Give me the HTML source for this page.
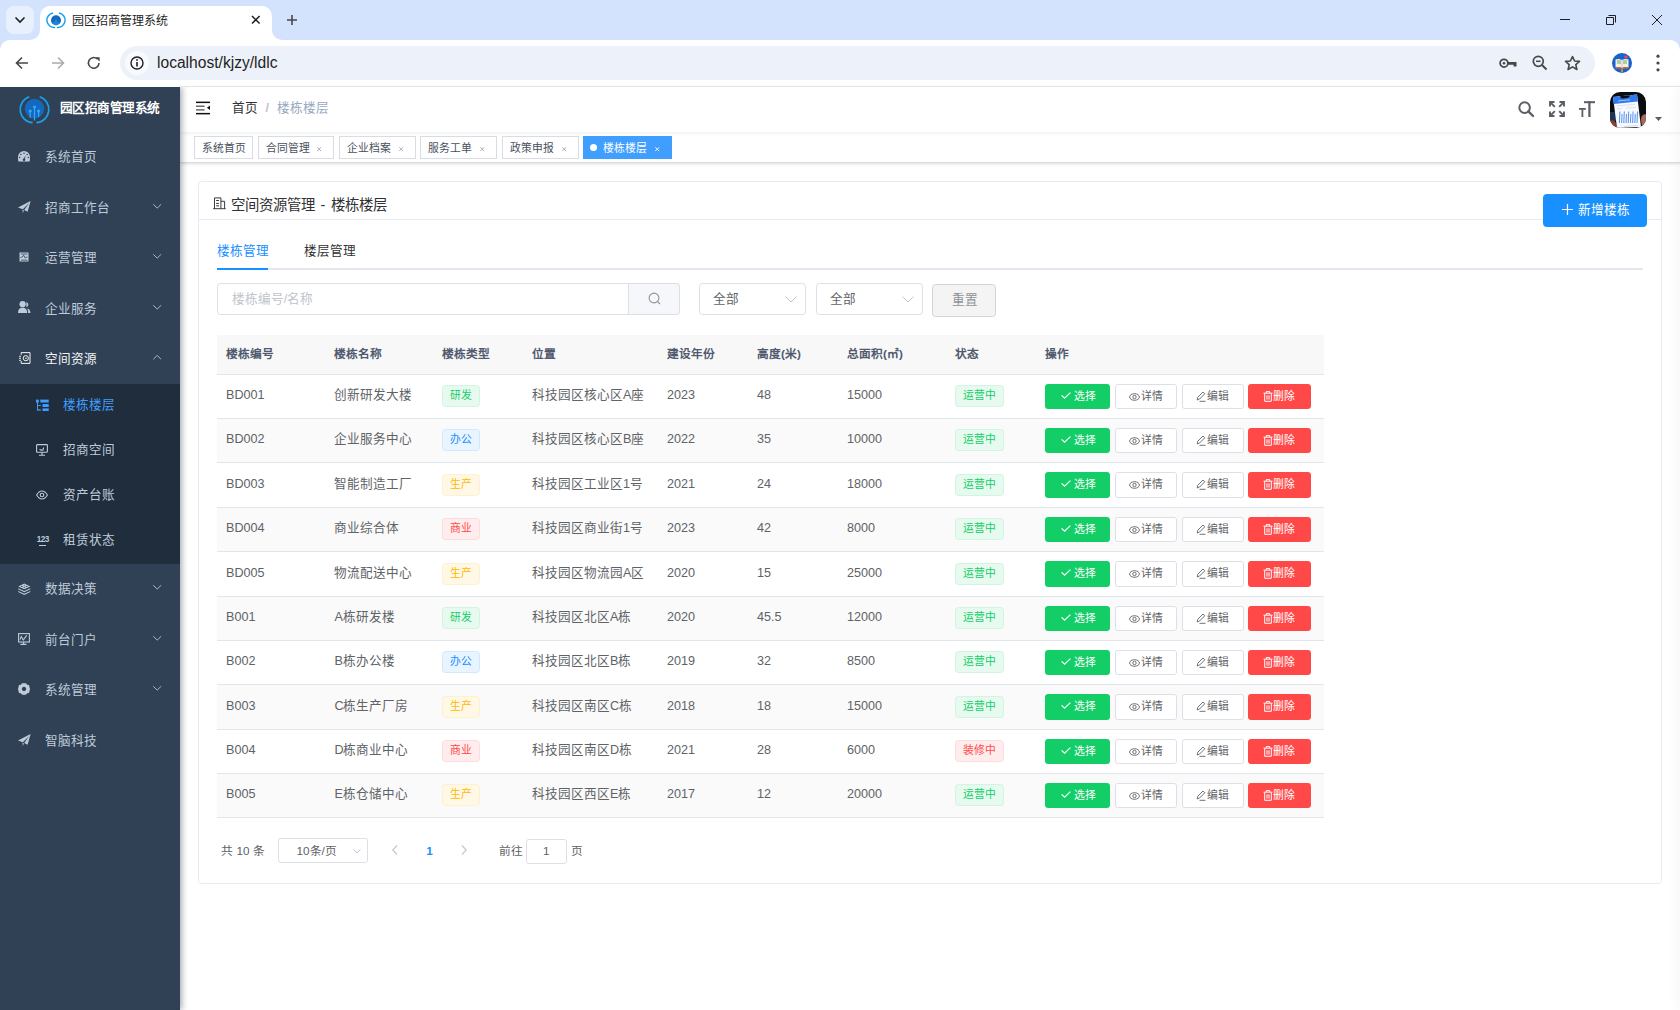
<!DOCTYPE html>
<html lang="zh-CN">
<head>
<meta charset="utf-8">
<style>
*{box-sizing:border-box;margin:0;padding:0}
html,body{width:1680px;height:1010px;overflow:hidden;background:#fff;font-family:"Liberation Sans",sans-serif;}
.a{position:absolute}
.t{position:absolute;white-space:nowrap}
svg{overflow:visible}
</style>
</head>
<body>
<div class="a" style="left:0px;top:0px;width:1680px;height:60px;background:#d3e3fd"></div><div class="a" style="left:0px;top:40px;width:1680px;height:47px;background:#fff;border-radius:10px 10px 0 0"></div><div class="a" style="left:6px;top:6px;width:28px;height:28px;background:#e8effd;border-radius:8px"></div><svg class="a" style="left:14px;top:16px;" width="12" height="8" viewBox="0 0 12 8"><path d="M1.5 1.5 L6 6 L10.5 1.5" fill="none" stroke="#1f1f1f" stroke-width="1.6"/></svg><svg class="a" style="left:30px;top:6px;" width="252" height="34" viewBox="0 0 252 34"><path d="M0 34 A10 10 0 0 0 10 24 L10 10 A10 10 0 0 1 20 0 L232 0 A10 10 0 0 1 242 10 L242 24 A10 10 0 0 0 252 34 Z" fill="#fff"/></svg><svg class="a" style="left:48px;top:12px;" width="16" height="16" viewBox="0 0 16 16"><path d="M5.2 0.9 A7.3 7.3 0 0 0 7.2 15.4" fill="none" stroke="#1aa3f0" stroke-width="1.5"/><path d="M10.8 0.9 A7.3 7.3 0 0 1 8.8 15.4" fill="none" stroke="#1aa3f0" stroke-width="1.5"/><circle cx="8" cy="8.2" r="5" fill="#1468c0"/><path d="M6 12.5 V9.5 M8 13.5 V7.5 M10 12.5 V9.5" stroke="#2ea6f0" stroke-width="0.9"/></svg><div class="t" style="left:72px;top:12.60px;font-size:12px;line-height:16.8px;color:#1f1f1f;font-weight:400;">园区招商管理系统</div><svg class="a" style="left:252.2px;top:16.1px;" width="7.6" height="7.6" viewBox="0 0 7.6 7.6"><path d="M0 0 L7.6 7.6 M7.6 0 L0 7.6" stroke="#1f1f1f" stroke-width="1.5"/></svg><svg class="a" style="left:287px;top:15px;" width="10" height="10" viewBox="0 0 10 10"><path d="M5 0 V10 M0 5 H10" stroke="#474747" stroke-width="1.6"/></svg><svg class="a" style="left:1560px;top:19px;" width="10" height="2" viewBox="0 0 10 2"><path d="M0 0.5 H10" stroke="#1f1f1f" stroke-width="1"/></svg><svg class="a" style="left:1604px;top:14px;" width="13" height="13" viewBox="0 0 13 13"><path d="M2.5 3.5 H9.5 V10.5 H2.5 Z M4.5 1.5 H11.5 V8.5" fill="none" stroke="#1f1f1f" stroke-width="1"/></svg><svg class="a" style="left:1652px;top:15px;" width="10" height="10" viewBox="0 0 10 10"><path d="M0 0 L10 10 M10 0 L0 10" stroke="#1f1f1f" stroke-width="1"/></svg><svg class="a" style="left:15px;top:56px;" width="14" height="14" viewBox="0 0 14 14"><path d="M13 7 H2 M7 1.5 L1.5 7 L7 12.5" fill="none" stroke="#474747" stroke-width="1.6"/></svg><svg class="a" style="left:51px;top:56px;" width="14" height="14" viewBox="0 0 14 14"><path d="M1 7 H12 M7 1.5 L12.5 7 L7 12.5" fill="none" stroke="#a8abb0" stroke-width="1.6"/></svg><svg class="a" style="left:87px;top:56px;" width="14" height="14" viewBox="0 0 14 14"><path d="M12 7 A5.3 5.3 0 1 1 10.2 2.9" fill="none" stroke="#474747" stroke-width="1.6"/><path d="M8.2 1.2 H12.6 V5.6 Z" fill="#474747"/></svg><div class="a" style="left:120px;top:46px;width:1475px;height:34px;background:#edf2fa;border-radius:17px"></div><div class="a" style="left:125px;top:51px;width:24px;height:24px;border-radius:12px;background:#f8fafd"></div><svg class="a" style="left:130px;top:56px;" width="14" height="14" viewBox="0 0 14 14"><circle cx="7" cy="7" r="6" fill="none" stroke="#1f1f1f" stroke-width="1.4"/><path d="M7 6 V10.5" stroke="#1f1f1f" stroke-width="1.6"/><circle cx="7" cy="3.9" r="0.95" fill="#1f1f1f"/></svg><div class="t" style="left:157.0px;top:52.28px;font-size:15.6px;line-height:21.84px;color:#1f1f1f;font-weight:400;">localhost/kjzy/ldlc</div><svg class="a" style="left:1499px;top:58px;" width="19" height="11" viewBox="0 0 19 11"><circle cx="5" cy="5.2" r="3.9" fill="none" stroke="#474747" stroke-width="1.7"/><circle cx="5" cy="5.2" r="1.3" fill="#474747"/><path d="M8.8 4 H17.5 V8.6 H14.5 V6.8 H8.8 Z" fill="#474747"/></svg><svg class="a" style="left:1532px;top:55px;" width="16" height="16" viewBox="0 0 16 16"><circle cx="6.3" cy="6.3" r="5" fill="none" stroke="#474747" stroke-width="1.7"/><path d="M10 10 L14.5 14.5" stroke="#474747" stroke-width="1.9"/><path d="M4 6.3 H8.6" stroke="#474747" stroke-width="1.5"/></svg><svg class="a" style="left:1564px;top:55px;" width="17" height="16" viewBox="0 0 17 16"><path d="M8.5 1.5 L10.6 6 L15.5 6.4 L11.8 9.6 L12.9 14.5 L8.5 11.9 L4.1 14.5 L5.2 9.6 L1.5 6.4 L6.4 6 Z" fill="none" stroke="#474747" stroke-width="1.6" stroke-linejoin="round"/></svg><svg class="a" style="left:1612px;top:53px;" width="20" height="20" viewBox="0 0 20 20"><circle cx="10" cy="10" r="10" fill="#1a62c7"/><path d="M3.5 6.5 Q7 5.5 10 7 Q13 5.5 16.5 6.5 V14.5 Q13 13.5 10 15 Q7 13.5 3.5 14.5 Z" fill="#f4efe4"/><path d="M3.5 14.5 Q7 13.5 10 15 Q13 13.5 16.5 14.5 V15.8 Q13 15 10 16.3 Q7 15 3.5 15.8 Z" fill="#d66a2c"/><path d="M11 8 H15 M11 10 H15 M5 8 H9 M5 10 H9" stroke="#5aa25a" stroke-width="0.9"/><path d="M10 7 V15" stroke="#c9b89a" stroke-width="0.6"/><rect x="9.4" y="16.2" width="1.2" height="3" fill="#f2c230"/><path d="M12 3 L15 2.5 L16 5 L13 5.5 Z" fill="#e84b5a"/></svg><svg class="a" style="left:1656px;top:54px;" width="4" height="18" viewBox="0 0 4 18"><circle cx="2" cy="2.2" r="1.6" fill="#474747"/><circle cx="2" cy="9" r="1.6" fill="#474747"/><circle cx="2" cy="15.8" r="1.6" fill="#474747"/></svg><div class="a" style="left:180px;top:86px;width:1500px;height:1px;background:#e6e7e9"></div><div class="a" style="left:180px;top:132px;width:1500px;height:30.6px;background:#fff;border-bottom:1px solid #d8dce5;box-shadow:0 1px 3px 0 rgba(0,0,0,.12),0 0 3px 0 rgba(0,0,0,.04)"></div><div class="a" style="left:180px;top:87px;width:1500px;height:45px;background:#fff;box-shadow:0 1px 4px rgba(0,21,41,.08)"></div><svg class="a" style="left:196px;top:101px;" width="14.5" height="14" viewBox="0 0 14.5 14"><rect x="0" y="0.6" width="14" height="1.5" fill="#111"/><rect x="0" y="11.9" width="14" height="1.5" fill="#111"/><rect x="0" y="4.6" width="8.6" height="1.2" fill="#444"/><rect x="0" y="8.3" width="8.6" height="1.2" fill="#444"/><path d="M14 4.4 V8.9 L10.9 6.65 Z" fill="#111"/></svg><div class="t" style="left:232.0px;top:100.18px;font-size:12.6px;line-height:17.64px;color:#303133;font-weight:400;">首页</div><div class="t" style="left:265.5px;top:100.18px;font-size:12.6px;line-height:17.64px;color:#c0c4cc;font-weight:400;font-weight:700">/</div><div class="t" style="left:276.8px;top:100.18px;font-size:12.6px;line-height:17.64px;color:#97a8be;font-weight:400;">楼栋楼层</div><svg class="a" style="left:1518px;top:101px;" width="16" height="16" viewBox="0 0 16 16"><circle cx="6.6" cy="6.6" r="5.3" fill="none" stroke="#5a5e66" stroke-width="2"/><path d="M10.4 10.4 L15 15" stroke="#5a5e66" stroke-width="2.4" stroke-linecap="round"/></svg><svg class="a" style="left:1549px;top:101px;" width="16" height="16" viewBox="0 0 16 16"><g stroke="#5a5e66" stroke-width="1.9" fill="none"><path d="M1 5.5 V1 H5.5 M1 1 L5.8 5.8"/><path d="M15 5.5 V1 H10.5 M15 1 L10.2 5.8"/><path d="M1 10.5 V15 H5.5 M1 15 L5.8 10.2"/><path d="M15 10.5 V15 H10.5 M15 15 L10.2 10.2"/></g></svg><svg class="a" style="left:1579px;top:101px;" width="16" height="16" viewBox="0 0 16 16"><g fill="#5a5e66"><rect x="5" y="0.2" width="11" height="2"/><rect x="9.3" y="0.2" width="2.2" height="15.8"/><rect x="0" y="7" width="6.8" height="1.8"/><rect x="2.5" y="7" width="1.8" height="9"/></g></svg><svg class="a" style="left:1610px;top:92px" width="36" height="36" viewBox="0 0 36 36"><defs><clipPath id="av"><rect x="0" y="0" width="36" height="36" rx="10"/></clipPath></defs><g clip-path="url(#av)"><rect width="36" height="36" fill="#0b0c0f"/><rect x="0" y="20" width="6" height="9" fill="#1d3550"/><path d="M0 29 Q4 27 6 31 L7 36 H0 Z" fill="#8a3f2e"/><path d="M36 22 Q31 22 31 28 L32 34 Q34 35 36 33 Z" fill="#a8685a"/><path d="M3 5 L27 2.5 L31 35 L7 36 Z" fill="#f7f9fc"/><path d="M3 5 L27 2.5 L27.8 9.5 L3.8 12 Z" fill="#2f7af0"/><path d="M10 4.3 L20 3.3 Q19.5 5.8 17.5 6 L12.5 6.5 Q10.5 6.6 10 4.3 Z" fill="#0b0c0f"/><path d="M8 9 L20 7.8" stroke="#bcd3fa" stroke-width="0.8"/><path d="M7 14 L25 12.3 M7 17 L12 16.6 M16 16.2 L26 15.2" stroke="#c8d2e2" stroke-width="0.6"/><path d="M9.4 31 L9.9 19.5" stroke="#3f86f2" stroke-width="0.9"/><path d="M11.6 31 L12.1 22.0" stroke="#3f86f2" stroke-width="0.9"/><path d="M13.8 31 L14.3 19.5" stroke="#3f86f2" stroke-width="0.9"/><path d="M16.0 31 L16.5 22.0" stroke="#3f86f2" stroke-width="0.9"/><path d="M18.2 31 L18.7 19.5" stroke="#3f86f2" stroke-width="0.9"/><path d="M20.4 31 L20.9 22.0" stroke="#3f86f2" stroke-width="0.9"/><path d="M22.6 31 L23.1 19.5" stroke="#3f86f2" stroke-width="0.9"/><path d="M24.8 31 L25.3 22.0" stroke="#3f86f2" stroke-width="0.9"/><path d="M27.0 31 L27.5 19.5" stroke="#3f86f2" stroke-width="0.9"/><path d="M14 34.5 L28 33.5" stroke="#b7c6dd" stroke-width="0.6"/></g></svg><svg class="a" style="left:1655px;top:117px;" width="7" height="4" viewBox="0 0 7 4"><path d="M0 0 H7 L3.5 4 Z" fill="#5a5e66"/></svg><div class="a" style="left:194.3px;top:136.3px;width:58.599999999999994px;height:22.4px;background:#fff;border:1px solid #d8dce5"></div><div class="t" style="left:202.3px;top:141.04px;font-size:10.8px;line-height:15.12px;color:#495060;font-weight:400;">系统首页</div><div class="a" style="left:258.3px;top:136.3px;width:75.30000000000001px;height:22.4px;background:#fff;border:1px solid #d8dce5"></div><div class="t" style="left:266.3px;top:141.04px;font-size:10.8px;line-height:15.12px;color:#495060;font-weight:400;">合同管理</div><svg class="a" style="left:316.6px;top:146.6px;" width="4.4" height="4.4" viewBox="0 0 4.4 4.4"><path d="M0.3 0.3 L4.1 4.1 M4.1 0.3 L0.3 4.1" stroke="#a0a4ab" stroke-width="0.9"/></svg><div class="a" style="left:339.2px;top:136.3px;width:76.5px;height:22.4px;background:#fff;border:1px solid #d8dce5"></div><div class="t" style="left:347.2px;top:141.04px;font-size:10.8px;line-height:15.12px;color:#495060;font-weight:400;">企业档案</div><svg class="a" style="left:398.7px;top:146.6px;" width="4.4" height="4.4" viewBox="0 0 4.4 4.4"><path d="M0.3 0.3 L4.1 4.1 M4.1 0.3 L0.3 4.1" stroke="#a0a4ab" stroke-width="0.9"/></svg><div class="a" style="left:420.0px;top:136.3px;width:76.69999999999999px;height:22.4px;background:#fff;border:1px solid #d8dce5"></div><div class="t" style="left:428.0px;top:141.04px;font-size:10.8px;line-height:15.12px;color:#495060;font-weight:400;">服务工单</div><svg class="a" style="left:479.7px;top:146.6px;" width="4.4" height="4.4" viewBox="0 0 4.4 4.4"><path d="M0.3 0.3 L4.1 4.1 M4.1 0.3 L0.3 4.1" stroke="#a0a4ab" stroke-width="0.9"/></svg><div class="a" style="left:502.0px;top:136.3px;width:76.60000000000002px;height:22.4px;background:#fff;border:1px solid #d8dce5"></div><div class="t" style="left:510.0px;top:141.04px;font-size:10.8px;line-height:15.12px;color:#495060;font-weight:400;">政策申报</div><svg class="a" style="left:561.6px;top:146.6px;" width="4.4" height="4.4" viewBox="0 0 4.4 4.4"><path d="M0.3 0.3 L4.1 4.1 M4.1 0.3 L0.3 4.1" stroke="#a0a4ab" stroke-width="0.9"/></svg><div class="a" style="left:582.8px;top:136.3px;width:89.0px;height:22.4px;background:#409eff;border:1px solid #409eff"></div><div class="a" style="left:590.3px;top:143.9px;width:7.2px;height:7.2px;border-radius:50%;background:#fff"></div><div class="t" style="left:603.3px;top:141.04px;font-size:10.8px;line-height:15.12px;color:#fff;font-weight:400;">楼栋楼层</div><svg class="a" style="left:654.8px;top:146.6px;" width="4.4" height="4.4" viewBox="0 0 4.4 4.4"><path d="M0.3 0.3 L4.1 4.1 M4.1 0.3 L0.3 4.1" stroke="#fff" stroke-width="0.9"/></svg><div class="a" style="left:198px;top:181px;width:1464px;height:703px;background:#fff;border:1px solid #e6ebf5;border-radius:3.6px"></div><div class="a" style="left:199px;top:219px;width:1462px;height:1px;background:#e6ebf5"></div><svg class="a" style="left:213px;top:197px;" width="13" height="13" viewBox="0 0 13 13"><g fill="none" stroke="#303133" stroke-width="0.95"><path d="M1.5 11.7 V0.9 H7.9 V11.7"/><path d="M7.9 4.3 H11.6 V11.7"/><path d="M0.1 11.7 H12.7"/><path d="M3.1 3.5 H6 M3.1 6.4 H6 M3.1 8.8 H6"/></g></svg><div class="t" style="left:231px;top:194.92px;font-size:14.4px;line-height:20.16px;color:#303133;font-weight:400;word-spacing:1.6px">空间资源管理 - 楼栋楼层</div><div class="a" style="left:1542.7px;top:194.2px;width:104.6px;height:32.6px;background:#1890ff;border:1px solid #1890ff;border-radius:3.6px"></div><svg class="a" style="left:1562px;top:204px;" width="11" height="11" viewBox="0 0 11 11"><path d="M5.5 0 V11 M0 5.5 H11" stroke="#fff" stroke-width="1.2"/></svg><div class="t" style="left:1578px;top:201.68px;font-size:12.6px;line-height:17.64px;color:#fff;font-weight:400;">新增楼栋</div><div class="t" style="left:217px;top:243.18px;font-size:12.6px;line-height:17.64px;color:#1890ff;font-weight:400;">楼栋管理</div><div class="t" style="left:303.6px;top:243.18px;font-size:12.6px;line-height:17.64px;color:#303133;font-weight:400;">楼层管理</div><div class="a" style="left:217px;top:268px;width:1426px;height:2px;background:#e4e7ed"></div><div class="a" style="left:217px;top:268px;width:50.5px;height:2px;background:#1890ff"></div><div class="a" style="left:217.3px;top:283.4px;width:462.4px;height:31.4px;background:#fff;border:1px solid #dcdfe6;border-radius:3.6px"></div><div class="a" style="left:628.4px;top:283.4px;width:51.3px;height:31.4px;background:#f5f7fa;border:1px solid #dcdfe6;border-radius:0 3.6px 3.6px 0"></div><div class="t" style="left:231.8px;top:291.18px;font-size:12.6px;line-height:17.64px;color:#c0c4cc;font-weight:400;">楼栋编号/名称</div><svg class="a" style="left:648px;top:292px;" width="13" height="13" viewBox="0 0 13 13"><circle cx="6" cy="6" r="4.9" fill="none" stroke="#909399" stroke-width="1.1"/><path d="M9.6 9.6 L12 12" stroke="#909399" stroke-width="1.1"/></svg><div class="a" style="left:698.5px;top:283.1px;width:107.20000000000005px;height:31.6px;background:#fff;border:1px solid #dcdfe6;border-radius:3.6px"></div><div class="t" style="left:713.0px;top:291.18px;font-size:12.6px;line-height:17.64px;color:#606266;font-weight:400;">全部</div><svg class="a" style="left:784.9000000000001px;top:296.4px;" width="12" height="6.5" viewBox="0 0 12 6.5"><path d="M0.5 0.5 L6 6 L11.5 0.5" fill="none" stroke="#c0c4cc" stroke-width="1"/></svg><div class="a" style="left:815.5px;top:283.1px;width:107.0px;height:31.6px;background:#fff;border:1px solid #dcdfe6;border-radius:3.6px"></div><div class="t" style="left:830.0px;top:291.18px;font-size:12.6px;line-height:17.64px;color:#606266;font-weight:400;">全部</div><svg class="a" style="left:901.7px;top:296.4px;" width="12" height="6.5" viewBox="0 0 12 6.5"><path d="M0.5 0.5 L6 6 L11.5 0.5" fill="none" stroke="#c0c4cc" stroke-width="1"/></svg><div class="a" style="left:932.2px;top:284.3px;width:63.4px;height:32.4px;background:#f4f4f5;border:1px solid #d3d4d6;border-radius:3.6px"></div><div class="t" style="left:951.5px;top:292.48px;font-size:12.6px;line-height:17.64px;color:#909399;font-weight:400;">重置</div><div class="a" style="left:217px;top:335px;width:1107px;height:39px;background:#f8f8f9"></div><div class="a" style="left:217px;top:374px;width:1107px;height:1px;background:#dfe6ec"></div><div class="t" style="left:226px;top:345.61px;font-size:11.7px;line-height:16.38px;color:#515a6e;font-weight:700;">楼栋编号</div><div class="t" style="left:334.4px;top:345.61px;font-size:11.7px;line-height:16.38px;color:#515a6e;font-weight:700;">楼栋名称</div><div class="t" style="left:442.3px;top:345.61px;font-size:11.7px;line-height:16.38px;color:#515a6e;font-weight:700;">楼栋类型</div><div class="t" style="left:532px;top:345.61px;font-size:11.7px;line-height:16.38px;color:#515a6e;font-weight:700;">位置</div><div class="t" style="left:667px;top:345.61px;font-size:11.7px;line-height:16.38px;color:#515a6e;font-weight:700;">建设年份</div><div class="t" style="left:757px;top:345.61px;font-size:11.7px;line-height:16.38px;color:#515a6e;font-weight:700;">高度(米)</div><div class="t" style="left:847px;top:345.61px;font-size:11.7px;line-height:16.38px;color:#515a6e;font-weight:700;">总面积(㎡)</div><div class="t" style="left:955px;top:345.61px;font-size:11.7px;line-height:16.38px;color:#515a6e;font-weight:700;">状态</div><div class="t" style="left:1045px;top:345.61px;font-size:11.7px;line-height:16.38px;color:#515a6e;font-weight:700;">操作</div><div class="a" style="left:217px;top:418px;width:1107px;height:1px;background:#dfe6ec"></div><div class="t" style="left:226px;top:387.18px;font-size:12.6px;line-height:17.64px;color:#606266;font-weight:400;">BD001</div><div class="t" style="left:334.4px;top:387.18px;font-size:12.6px;line-height:17.64px;color:#606266;font-weight:400;">创新研发大楼</div><div class="t" style="left:532px;top:387.18px;font-size:12.6px;line-height:17.64px;color:#606266;font-weight:400;">科技园区核心区A座</div><div class="t" style="left:667px;top:387.18px;font-size:12.6px;line-height:17.64px;color:#606266;font-weight:400;">2023</div><div class="t" style="left:757px;top:387.18px;font-size:12.6px;line-height:17.64px;color:#606266;font-weight:400;">48</div><div class="t" style="left:847px;top:387.18px;font-size:12.6px;line-height:17.64px;color:#606266;font-weight:400;">15000</div><div class="a" style="left:442.3px;top:385px;width:37.5px;height:22px;background:#e7faf0;border:1px solid #d0f5e0;border-radius:3.6px"></div><div class="t" style="left:449.6px;top:388.34px;font-size:10.8px;line-height:15.12px;color:#13ce66;font-weight:400;">研发</div><div class="a" style="left:955.2px;top:385px;width:48.6px;height:22px;background:#e7faf0;border:1px solid #d0f5e0;border-radius:3.6px"></div><div class="t" style="left:962.5px;top:388.34px;font-size:10.8px;line-height:15.12px;color:#13ce66;font-weight:400;">运营中</div><div class="a" style="left:1045.1px;top:384px;width:64.6px;height:25px;background:#13ce66;border:1px solid #13ce66;border-radius:2.7px"></div><svg class="a" style="left:1060.5px;top:392.4px;" width="10" height="7" viewBox="0 0 10 7"><path d="M0.6 3.4 L3.6 6.2 L9.4 0.6" fill="none" stroke="#fff" stroke-width="1.2"/></svg><div class="t" style="left:1073.6px;top:389.24px;font-size:10.8px;line-height:15.12px;color:#fff;font-weight:400;">选择</div><div class="a" style="left:1115.2px;top:384px;width:61.5px;height:25px;background:#fff;border:1px solid #dcdfe6;border-radius:2.7px"></div><svg class="a" style="left:1129px;top:392.5px;" width="11" height="8" viewBox="0 0 11 8"><ellipse cx="5.5" cy="4" rx="4.9" ry="3.3" fill="none" stroke="#606266" stroke-width="0.9"/><circle cx="5.5" cy="4" r="1.7" fill="none" stroke="#606266" stroke-width="0.9"/></svg><div class="t" style="left:1140.5px;top:389.24px;font-size:10.8px;line-height:15.12px;color:#606266;font-weight:400;">详情</div><div class="a" style="left:1182.2px;top:384px;width:61.4px;height:25px;background:#fff;border:1px solid #dcdfe6;border-radius:2.7px"></div><svg class="a" style="left:1196px;top:391px;" width="10" height="11" viewBox="0 0 10 11"><path d="M1.2 9 L1.8 6.2 L7 1 L8.8 2.8 L3.6 8 Z" fill="none" stroke="#606266" stroke-width="0.9"/><path d="M3.5 10.3 H9.5" stroke="#606266" stroke-width="0.9"/></svg><div class="t" style="left:1206.5px;top:389.24px;font-size:10.8px;line-height:15.12px;color:#606266;font-weight:400;">编辑</div><div class="a" style="left:1248px;top:384px;width:62.8px;height:25px;background:#ff4949;border:1px solid #ff4949;border-radius:2.7px"></div><svg class="a" style="left:1262.5px;top:391px;" width="10" height="11" viewBox="0 0 10 11"><path d="M0.5 2.2 H9.5 M3.3 2 V0.6 H6.7 V2 M1.7 2.5 V10.3 H8.3 V2.5 M4 4.3 V8.6 M6 4.3 V8.6" fill="none" stroke="#fff" stroke-width="1"/></svg><div class="t" style="left:1273px;top:389.24px;font-size:10.8px;line-height:15.12px;color:#fff;font-weight:400;">删除</div><div class="a" style="left:217px;top:419px;width:1107px;height:43px;background:#fafafa"></div><div class="a" style="left:217px;top:462px;width:1107px;height:1px;background:#dfe6ec"></div><div class="t" style="left:226px;top:431.18px;font-size:12.6px;line-height:17.64px;color:#606266;font-weight:400;">BD002</div><div class="t" style="left:334.4px;top:431.18px;font-size:12.6px;line-height:17.64px;color:#606266;font-weight:400;">企业服务中心</div><div class="t" style="left:532px;top:431.18px;font-size:12.6px;line-height:17.64px;color:#606266;font-weight:400;">科技园区核心区B座</div><div class="t" style="left:667px;top:431.18px;font-size:12.6px;line-height:17.64px;color:#606266;font-weight:400;">2022</div><div class="t" style="left:757px;top:431.18px;font-size:12.6px;line-height:17.64px;color:#606266;font-weight:400;">35</div><div class="t" style="left:847px;top:431.18px;font-size:12.6px;line-height:17.64px;color:#606266;font-weight:400;">10000</div><div class="a" style="left:442.3px;top:429px;width:37.5px;height:22px;background:#e8f4ff;border:1px solid #d1e9ff;border-radius:3.6px"></div><div class="t" style="left:449.6px;top:432.34px;font-size:10.8px;line-height:15.12px;color:#1890ff;font-weight:400;">办公</div><div class="a" style="left:955.2px;top:429px;width:48.6px;height:22px;background:#e7faf0;border:1px solid #d0f5e0;border-radius:3.6px"></div><div class="t" style="left:962.5px;top:432.34px;font-size:10.8px;line-height:15.12px;color:#13ce66;font-weight:400;">运营中</div><div class="a" style="left:1045.1px;top:428px;width:64.6px;height:25px;background:#13ce66;border:1px solid #13ce66;border-radius:2.7px"></div><svg class="a" style="left:1060.5px;top:436.4px;" width="10" height="7" viewBox="0 0 10 7"><path d="M0.6 3.4 L3.6 6.2 L9.4 0.6" fill="none" stroke="#fff" stroke-width="1.2"/></svg><div class="t" style="left:1073.6px;top:433.24px;font-size:10.8px;line-height:15.12px;color:#fff;font-weight:400;">选择</div><div class="a" style="left:1115.2px;top:428px;width:61.5px;height:25px;background:#fff;border:1px solid #dcdfe6;border-radius:2.7px"></div><svg class="a" style="left:1129px;top:436.5px;" width="11" height="8" viewBox="0 0 11 8"><ellipse cx="5.5" cy="4" rx="4.9" ry="3.3" fill="none" stroke="#606266" stroke-width="0.9"/><circle cx="5.5" cy="4" r="1.7" fill="none" stroke="#606266" stroke-width="0.9"/></svg><div class="t" style="left:1140.5px;top:433.24px;font-size:10.8px;line-height:15.12px;color:#606266;font-weight:400;">详情</div><div class="a" style="left:1182.2px;top:428px;width:61.4px;height:25px;background:#fff;border:1px solid #dcdfe6;border-radius:2.7px"></div><svg class="a" style="left:1196px;top:435px;" width="10" height="11" viewBox="0 0 10 11"><path d="M1.2 9 L1.8 6.2 L7 1 L8.8 2.8 L3.6 8 Z" fill="none" stroke="#606266" stroke-width="0.9"/><path d="M3.5 10.3 H9.5" stroke="#606266" stroke-width="0.9"/></svg><div class="t" style="left:1206.5px;top:433.24px;font-size:10.8px;line-height:15.12px;color:#606266;font-weight:400;">编辑</div><div class="a" style="left:1248px;top:428px;width:62.8px;height:25px;background:#ff4949;border:1px solid #ff4949;border-radius:2.7px"></div><svg class="a" style="left:1262.5px;top:435px;" width="10" height="11" viewBox="0 0 10 11"><path d="M0.5 2.2 H9.5 M3.3 2 V0.6 H6.7 V2 M1.7 2.5 V10.3 H8.3 V2.5 M4 4.3 V8.6 M6 4.3 V8.6" fill="none" stroke="#fff" stroke-width="1"/></svg><div class="t" style="left:1273px;top:433.24px;font-size:10.8px;line-height:15.12px;color:#fff;font-weight:400;">删除</div><div class="a" style="left:217px;top:507px;width:1107px;height:1px;background:#dfe6ec"></div><div class="t" style="left:226px;top:475.68px;font-size:12.6px;line-height:17.64px;color:#606266;font-weight:400;">BD003</div><div class="t" style="left:334.4px;top:475.68px;font-size:12.6px;line-height:17.64px;color:#606266;font-weight:400;">智能制造工厂</div><div class="t" style="left:532px;top:475.68px;font-size:12.6px;line-height:17.64px;color:#606266;font-weight:400;">科技园区工业区1号</div><div class="t" style="left:667px;top:475.68px;font-size:12.6px;line-height:17.64px;color:#606266;font-weight:400;">2021</div><div class="t" style="left:757px;top:475.68px;font-size:12.6px;line-height:17.64px;color:#606266;font-weight:400;">24</div><div class="t" style="left:847px;top:475.68px;font-size:12.6px;line-height:17.64px;color:#606266;font-weight:400;">18000</div><div class="a" style="left:442.3px;top:474px;width:37.5px;height:22px;background:#fff8e6;border:1px solid #fff1cc;border-radius:3.6px"></div><div class="t" style="left:449.6px;top:477.34px;font-size:10.8px;line-height:15.12px;color:#ffba00;font-weight:400;">生产</div><div class="a" style="left:955.2px;top:474px;width:48.6px;height:22px;background:#e7faf0;border:1px solid #d0f5e0;border-radius:3.6px"></div><div class="t" style="left:962.5px;top:477.34px;font-size:10.8px;line-height:15.12px;color:#13ce66;font-weight:400;">运营中</div><div class="a" style="left:1045.1px;top:472px;width:64.6px;height:26px;background:#13ce66;border:1px solid #13ce66;border-radius:2.7px"></div><svg class="a" style="left:1060.5px;top:480.4px;" width="10" height="7" viewBox="0 0 10 7"><path d="M0.6 3.4 L3.6 6.2 L9.4 0.6" fill="none" stroke="#fff" stroke-width="1.2"/></svg><div class="t" style="left:1073.6px;top:477.24px;font-size:10.8px;line-height:15.12px;color:#fff;font-weight:400;">选择</div><div class="a" style="left:1115.2px;top:472px;width:61.5px;height:26px;background:#fff;border:1px solid #dcdfe6;border-radius:2.7px"></div><svg class="a" style="left:1129px;top:480.5px;" width="11" height="8" viewBox="0 0 11 8"><ellipse cx="5.5" cy="4" rx="4.9" ry="3.3" fill="none" stroke="#606266" stroke-width="0.9"/><circle cx="5.5" cy="4" r="1.7" fill="none" stroke="#606266" stroke-width="0.9"/></svg><div class="t" style="left:1140.5px;top:477.24px;font-size:10.8px;line-height:15.12px;color:#606266;font-weight:400;">详情</div><div class="a" style="left:1182.2px;top:472px;width:61.4px;height:26px;background:#fff;border:1px solid #dcdfe6;border-radius:2.7px"></div><svg class="a" style="left:1196px;top:479px;" width="10" height="11" viewBox="0 0 10 11"><path d="M1.2 9 L1.8 6.2 L7 1 L8.8 2.8 L3.6 8 Z" fill="none" stroke="#606266" stroke-width="0.9"/><path d="M3.5 10.3 H9.5" stroke="#606266" stroke-width="0.9"/></svg><div class="t" style="left:1206.5px;top:477.24px;font-size:10.8px;line-height:15.12px;color:#606266;font-weight:400;">编辑</div><div class="a" style="left:1248px;top:472px;width:62.8px;height:26px;background:#ff4949;border:1px solid #ff4949;border-radius:2.7px"></div><svg class="a" style="left:1262.5px;top:479px;" width="10" height="11" viewBox="0 0 10 11"><path d="M0.5 2.2 H9.5 M3.3 2 V0.6 H6.7 V2 M1.7 2.5 V10.3 H8.3 V2.5 M4 4.3 V8.6 M6 4.3 V8.6" fill="none" stroke="#fff" stroke-width="1"/></svg><div class="t" style="left:1273px;top:477.24px;font-size:10.8px;line-height:15.12px;color:#fff;font-weight:400;">删除</div><div class="a" style="left:217px;top:508px;width:1107px;height:43px;background:#fafafa"></div><div class="a" style="left:217px;top:551px;width:1107px;height:1px;background:#dfe6ec"></div><div class="t" style="left:226px;top:520.18px;font-size:12.6px;line-height:17.64px;color:#606266;font-weight:400;">BD004</div><div class="t" style="left:334.4px;top:520.18px;font-size:12.6px;line-height:17.64px;color:#606266;font-weight:400;">商业综合体</div><div class="t" style="left:532px;top:520.18px;font-size:12.6px;line-height:17.64px;color:#606266;font-weight:400;">科技园区商业街1号</div><div class="t" style="left:667px;top:520.18px;font-size:12.6px;line-height:17.64px;color:#606266;font-weight:400;">2023</div><div class="t" style="left:757px;top:520.18px;font-size:12.6px;line-height:17.64px;color:#606266;font-weight:400;">42</div><div class="t" style="left:847px;top:520.18px;font-size:12.6px;line-height:17.64px;color:#606266;font-weight:400;">8000</div><div class="a" style="left:442.3px;top:518px;width:37.5px;height:22px;background:#ffeded;border:1px solid #ffdbdb;border-radius:3.6px"></div><div class="t" style="left:449.6px;top:521.34px;font-size:10.8px;line-height:15.12px;color:#ff4949;font-weight:400;">商业</div><div class="a" style="left:955.2px;top:518px;width:48.6px;height:22px;background:#e7faf0;border:1px solid #d0f5e0;border-radius:3.6px"></div><div class="t" style="left:962.5px;top:521.34px;font-size:10.8px;line-height:15.12px;color:#13ce66;font-weight:400;">运营中</div><div class="a" style="left:1045.1px;top:517px;width:64.6px;height:25px;background:#13ce66;border:1px solid #13ce66;border-radius:2.7px"></div><svg class="a" style="left:1060.5px;top:525.4px;" width="10" height="7" viewBox="0 0 10 7"><path d="M0.6 3.4 L3.6 6.2 L9.4 0.6" fill="none" stroke="#fff" stroke-width="1.2"/></svg><div class="t" style="left:1073.6px;top:522.24px;font-size:10.8px;line-height:15.12px;color:#fff;font-weight:400;">选择</div><div class="a" style="left:1115.2px;top:517px;width:61.5px;height:25px;background:#fff;border:1px solid #dcdfe6;border-radius:2.7px"></div><svg class="a" style="left:1129px;top:525.5px;" width="11" height="8" viewBox="0 0 11 8"><ellipse cx="5.5" cy="4" rx="4.9" ry="3.3" fill="none" stroke="#606266" stroke-width="0.9"/><circle cx="5.5" cy="4" r="1.7" fill="none" stroke="#606266" stroke-width="0.9"/></svg><div class="t" style="left:1140.5px;top:522.24px;font-size:10.8px;line-height:15.12px;color:#606266;font-weight:400;">详情</div><div class="a" style="left:1182.2px;top:517px;width:61.4px;height:25px;background:#fff;border:1px solid #dcdfe6;border-radius:2.7px"></div><svg class="a" style="left:1196px;top:524px;" width="10" height="11" viewBox="0 0 10 11"><path d="M1.2 9 L1.8 6.2 L7 1 L8.8 2.8 L3.6 8 Z" fill="none" stroke="#606266" stroke-width="0.9"/><path d="M3.5 10.3 H9.5" stroke="#606266" stroke-width="0.9"/></svg><div class="t" style="left:1206.5px;top:522.24px;font-size:10.8px;line-height:15.12px;color:#606266;font-weight:400;">编辑</div><div class="a" style="left:1248px;top:517px;width:62.8px;height:25px;background:#ff4949;border:1px solid #ff4949;border-radius:2.7px"></div><svg class="a" style="left:1262.5px;top:524px;" width="10" height="11" viewBox="0 0 10 11"><path d="M0.5 2.2 H9.5 M3.3 2 V0.6 H6.7 V2 M1.7 2.5 V10.3 H8.3 V2.5 M4 4.3 V8.6 M6 4.3 V8.6" fill="none" stroke="#fff" stroke-width="1"/></svg><div class="t" style="left:1273px;top:522.24px;font-size:10.8px;line-height:15.12px;color:#fff;font-weight:400;">删除</div><div class="a" style="left:217px;top:596px;width:1107px;height:1px;background:#dfe6ec"></div><div class="t" style="left:226px;top:564.68px;font-size:12.6px;line-height:17.64px;color:#606266;font-weight:400;">BD005</div><div class="t" style="left:334.4px;top:564.68px;font-size:12.6px;line-height:17.64px;color:#606266;font-weight:400;">物流配送中心</div><div class="t" style="left:532px;top:564.68px;font-size:12.6px;line-height:17.64px;color:#606266;font-weight:400;">科技园区物流园A区</div><div class="t" style="left:667px;top:564.68px;font-size:12.6px;line-height:17.64px;color:#606266;font-weight:400;">2020</div><div class="t" style="left:757px;top:564.68px;font-size:12.6px;line-height:17.64px;color:#606266;font-weight:400;">15</div><div class="t" style="left:847px;top:564.68px;font-size:12.6px;line-height:17.64px;color:#606266;font-weight:400;">25000</div><div class="a" style="left:442.3px;top:563px;width:37.5px;height:22px;background:#fff8e6;border:1px solid #fff1cc;border-radius:3.6px"></div><div class="t" style="left:449.6px;top:566.34px;font-size:10.8px;line-height:15.12px;color:#ffba00;font-weight:400;">生产</div><div class="a" style="left:955.2px;top:563px;width:48.6px;height:22px;background:#e7faf0;border:1px solid #d0f5e0;border-radius:3.6px"></div><div class="t" style="left:962.5px;top:566.34px;font-size:10.8px;line-height:15.12px;color:#13ce66;font-weight:400;">运营中</div><div class="a" style="left:1045.1px;top:561px;width:64.6px;height:26px;background:#13ce66;border:1px solid #13ce66;border-radius:2.7px"></div><svg class="a" style="left:1060.5px;top:569.4px;" width="10" height="7" viewBox="0 0 10 7"><path d="M0.6 3.4 L3.6 6.2 L9.4 0.6" fill="none" stroke="#fff" stroke-width="1.2"/></svg><div class="t" style="left:1073.6px;top:566.24px;font-size:10.8px;line-height:15.12px;color:#fff;font-weight:400;">选择</div><div class="a" style="left:1115.2px;top:561px;width:61.5px;height:26px;background:#fff;border:1px solid #dcdfe6;border-radius:2.7px"></div><svg class="a" style="left:1129px;top:569.5px;" width="11" height="8" viewBox="0 0 11 8"><ellipse cx="5.5" cy="4" rx="4.9" ry="3.3" fill="none" stroke="#606266" stroke-width="0.9"/><circle cx="5.5" cy="4" r="1.7" fill="none" stroke="#606266" stroke-width="0.9"/></svg><div class="t" style="left:1140.5px;top:566.24px;font-size:10.8px;line-height:15.12px;color:#606266;font-weight:400;">详情</div><div class="a" style="left:1182.2px;top:561px;width:61.4px;height:26px;background:#fff;border:1px solid #dcdfe6;border-radius:2.7px"></div><svg class="a" style="left:1196px;top:568px;" width="10" height="11" viewBox="0 0 10 11"><path d="M1.2 9 L1.8 6.2 L7 1 L8.8 2.8 L3.6 8 Z" fill="none" stroke="#606266" stroke-width="0.9"/><path d="M3.5 10.3 H9.5" stroke="#606266" stroke-width="0.9"/></svg><div class="t" style="left:1206.5px;top:566.24px;font-size:10.8px;line-height:15.12px;color:#606266;font-weight:400;">编辑</div><div class="a" style="left:1248px;top:561px;width:62.8px;height:26px;background:#ff4949;border:1px solid #ff4949;border-radius:2.7px"></div><svg class="a" style="left:1262.5px;top:568px;" width="10" height="11" viewBox="0 0 10 11"><path d="M0.5 2.2 H9.5 M3.3 2 V0.6 H6.7 V2 M1.7 2.5 V10.3 H8.3 V2.5 M4 4.3 V8.6 M6 4.3 V8.6" fill="none" stroke="#fff" stroke-width="1"/></svg><div class="t" style="left:1273px;top:566.24px;font-size:10.8px;line-height:15.12px;color:#fff;font-weight:400;">删除</div><div class="a" style="left:217px;top:597px;width:1107px;height:43px;background:#fafafa"></div><div class="a" style="left:217px;top:640px;width:1107px;height:1px;background:#dfe6ec"></div><div class="t" style="left:226px;top:609.18px;font-size:12.6px;line-height:17.64px;color:#606266;font-weight:400;">B001</div><div class="t" style="left:334.4px;top:609.18px;font-size:12.6px;line-height:17.64px;color:#606266;font-weight:400;">A栋研发楼</div><div class="t" style="left:532px;top:609.18px;font-size:12.6px;line-height:17.64px;color:#606266;font-weight:400;">科技园区北区A栋</div><div class="t" style="left:667px;top:609.18px;font-size:12.6px;line-height:17.64px;color:#606266;font-weight:400;">2020</div><div class="t" style="left:757px;top:609.18px;font-size:12.6px;line-height:17.64px;color:#606266;font-weight:400;">45.5</div><div class="t" style="left:847px;top:609.18px;font-size:12.6px;line-height:17.64px;color:#606266;font-weight:400;">12000</div><div class="a" style="left:442.3px;top:607px;width:37.5px;height:22px;background:#e7faf0;border:1px solid #d0f5e0;border-radius:3.6px"></div><div class="t" style="left:449.6px;top:610.34px;font-size:10.8px;line-height:15.12px;color:#13ce66;font-weight:400;">研发</div><div class="a" style="left:955.2px;top:607px;width:48.6px;height:22px;background:#e7faf0;border:1px solid #d0f5e0;border-radius:3.6px"></div><div class="t" style="left:962.5px;top:610.34px;font-size:10.8px;line-height:15.12px;color:#13ce66;font-weight:400;">运营中</div><div class="a" style="left:1045.1px;top:606px;width:64.6px;height:25px;background:#13ce66;border:1px solid #13ce66;border-radius:2.7px"></div><svg class="a" style="left:1060.5px;top:614.4px;" width="10" height="7" viewBox="0 0 10 7"><path d="M0.6 3.4 L3.6 6.2 L9.4 0.6" fill="none" stroke="#fff" stroke-width="1.2"/></svg><div class="t" style="left:1073.6px;top:611.24px;font-size:10.8px;line-height:15.12px;color:#fff;font-weight:400;">选择</div><div class="a" style="left:1115.2px;top:606px;width:61.5px;height:25px;background:#fff;border:1px solid #dcdfe6;border-radius:2.7px"></div><svg class="a" style="left:1129px;top:614.5px;" width="11" height="8" viewBox="0 0 11 8"><ellipse cx="5.5" cy="4" rx="4.9" ry="3.3" fill="none" stroke="#606266" stroke-width="0.9"/><circle cx="5.5" cy="4" r="1.7" fill="none" stroke="#606266" stroke-width="0.9"/></svg><div class="t" style="left:1140.5px;top:611.24px;font-size:10.8px;line-height:15.12px;color:#606266;font-weight:400;">详情</div><div class="a" style="left:1182.2px;top:606px;width:61.4px;height:25px;background:#fff;border:1px solid #dcdfe6;border-radius:2.7px"></div><svg class="a" style="left:1196px;top:613px;" width="10" height="11" viewBox="0 0 10 11"><path d="M1.2 9 L1.8 6.2 L7 1 L8.8 2.8 L3.6 8 Z" fill="none" stroke="#606266" stroke-width="0.9"/><path d="M3.5 10.3 H9.5" stroke="#606266" stroke-width="0.9"/></svg><div class="t" style="left:1206.5px;top:611.24px;font-size:10.8px;line-height:15.12px;color:#606266;font-weight:400;">编辑</div><div class="a" style="left:1248px;top:606px;width:62.8px;height:25px;background:#ff4949;border:1px solid #ff4949;border-radius:2.7px"></div><svg class="a" style="left:1262.5px;top:613px;" width="10" height="11" viewBox="0 0 10 11"><path d="M0.5 2.2 H9.5 M3.3 2 V0.6 H6.7 V2 M1.7 2.5 V10.3 H8.3 V2.5 M4 4.3 V8.6 M6 4.3 V8.6" fill="none" stroke="#fff" stroke-width="1"/></svg><div class="t" style="left:1273px;top:611.24px;font-size:10.8px;line-height:15.12px;color:#fff;font-weight:400;">删除</div><div class="a" style="left:217px;top:684px;width:1107px;height:1px;background:#dfe6ec"></div><div class="t" style="left:226px;top:653.18px;font-size:12.6px;line-height:17.64px;color:#606266;font-weight:400;">B002</div><div class="t" style="left:334.4px;top:653.18px;font-size:12.6px;line-height:17.64px;color:#606266;font-weight:400;">B栋办公楼</div><div class="t" style="left:532px;top:653.18px;font-size:12.6px;line-height:17.64px;color:#606266;font-weight:400;">科技园区北区B栋</div><div class="t" style="left:667px;top:653.18px;font-size:12.6px;line-height:17.64px;color:#606266;font-weight:400;">2019</div><div class="t" style="left:757px;top:653.18px;font-size:12.6px;line-height:17.64px;color:#606266;font-weight:400;">32</div><div class="t" style="left:847px;top:653.18px;font-size:12.6px;line-height:17.64px;color:#606266;font-weight:400;">8500</div><div class="a" style="left:442.3px;top:651px;width:37.5px;height:22px;background:#e8f4ff;border:1px solid #d1e9ff;border-radius:3.6px"></div><div class="t" style="left:449.6px;top:654.34px;font-size:10.8px;line-height:15.12px;color:#1890ff;font-weight:400;">办公</div><div class="a" style="left:955.2px;top:651px;width:48.6px;height:22px;background:#e7faf0;border:1px solid #d0f5e0;border-radius:3.6px"></div><div class="t" style="left:962.5px;top:654.34px;font-size:10.8px;line-height:15.12px;color:#13ce66;font-weight:400;">运营中</div><div class="a" style="left:1045.1px;top:650px;width:64.6px;height:25px;background:#13ce66;border:1px solid #13ce66;border-radius:2.7px"></div><svg class="a" style="left:1060.5px;top:658.4px;" width="10" height="7" viewBox="0 0 10 7"><path d="M0.6 3.4 L3.6 6.2 L9.4 0.6" fill="none" stroke="#fff" stroke-width="1.2"/></svg><div class="t" style="left:1073.6px;top:655.24px;font-size:10.8px;line-height:15.12px;color:#fff;font-weight:400;">选择</div><div class="a" style="left:1115.2px;top:650px;width:61.5px;height:25px;background:#fff;border:1px solid #dcdfe6;border-radius:2.7px"></div><svg class="a" style="left:1129px;top:658.5px;" width="11" height="8" viewBox="0 0 11 8"><ellipse cx="5.5" cy="4" rx="4.9" ry="3.3" fill="none" stroke="#606266" stroke-width="0.9"/><circle cx="5.5" cy="4" r="1.7" fill="none" stroke="#606266" stroke-width="0.9"/></svg><div class="t" style="left:1140.5px;top:655.24px;font-size:10.8px;line-height:15.12px;color:#606266;font-weight:400;">详情</div><div class="a" style="left:1182.2px;top:650px;width:61.4px;height:25px;background:#fff;border:1px solid #dcdfe6;border-radius:2.7px"></div><svg class="a" style="left:1196px;top:657px;" width="10" height="11" viewBox="0 0 10 11"><path d="M1.2 9 L1.8 6.2 L7 1 L8.8 2.8 L3.6 8 Z" fill="none" stroke="#606266" stroke-width="0.9"/><path d="M3.5 10.3 H9.5" stroke="#606266" stroke-width="0.9"/></svg><div class="t" style="left:1206.5px;top:655.24px;font-size:10.8px;line-height:15.12px;color:#606266;font-weight:400;">编辑</div><div class="a" style="left:1248px;top:650px;width:62.8px;height:25px;background:#ff4949;border:1px solid #ff4949;border-radius:2.7px"></div><svg class="a" style="left:1262.5px;top:657px;" width="10" height="11" viewBox="0 0 10 11"><path d="M0.5 2.2 H9.5 M3.3 2 V0.6 H6.7 V2 M1.7 2.5 V10.3 H8.3 V2.5 M4 4.3 V8.6 M6 4.3 V8.6" fill="none" stroke="#fff" stroke-width="1"/></svg><div class="t" style="left:1273px;top:655.24px;font-size:10.8px;line-height:15.12px;color:#fff;font-weight:400;">删除</div><div class="a" style="left:217px;top:685px;width:1107px;height:44px;background:#fafafa"></div><div class="a" style="left:217px;top:729px;width:1107px;height:1px;background:#dfe6ec"></div><div class="t" style="left:226px;top:697.68px;font-size:12.6px;line-height:17.64px;color:#606266;font-weight:400;">B003</div><div class="t" style="left:334.4px;top:697.68px;font-size:12.6px;line-height:17.64px;color:#606266;font-weight:400;">C栋生产厂房</div><div class="t" style="left:532px;top:697.68px;font-size:12.6px;line-height:17.64px;color:#606266;font-weight:400;">科技园区南区C栋</div><div class="t" style="left:667px;top:697.68px;font-size:12.6px;line-height:17.64px;color:#606266;font-weight:400;">2018</div><div class="t" style="left:757px;top:697.68px;font-size:12.6px;line-height:17.64px;color:#606266;font-weight:400;">18</div><div class="t" style="left:847px;top:697.68px;font-size:12.6px;line-height:17.64px;color:#606266;font-weight:400;">15000</div><div class="a" style="left:442.3px;top:696px;width:37.5px;height:22px;background:#fff8e6;border:1px solid #fff1cc;border-radius:3.6px"></div><div class="t" style="left:449.6px;top:699.34px;font-size:10.8px;line-height:15.12px;color:#ffba00;font-weight:400;">生产</div><div class="a" style="left:955.2px;top:696px;width:48.6px;height:22px;background:#e7faf0;border:1px solid #d0f5e0;border-radius:3.6px"></div><div class="t" style="left:962.5px;top:699.34px;font-size:10.8px;line-height:15.12px;color:#13ce66;font-weight:400;">运营中</div><div class="a" style="left:1045.1px;top:694px;width:64.6px;height:26px;background:#13ce66;border:1px solid #13ce66;border-radius:2.7px"></div><svg class="a" style="left:1060.5px;top:702.4px;" width="10" height="7" viewBox="0 0 10 7"><path d="M0.6 3.4 L3.6 6.2 L9.4 0.6" fill="none" stroke="#fff" stroke-width="1.2"/></svg><div class="t" style="left:1073.6px;top:699.24px;font-size:10.8px;line-height:15.12px;color:#fff;font-weight:400;">选择</div><div class="a" style="left:1115.2px;top:694px;width:61.5px;height:26px;background:#fff;border:1px solid #dcdfe6;border-radius:2.7px"></div><svg class="a" style="left:1129px;top:702.5px;" width="11" height="8" viewBox="0 0 11 8"><ellipse cx="5.5" cy="4" rx="4.9" ry="3.3" fill="none" stroke="#606266" stroke-width="0.9"/><circle cx="5.5" cy="4" r="1.7" fill="none" stroke="#606266" stroke-width="0.9"/></svg><div class="t" style="left:1140.5px;top:699.24px;font-size:10.8px;line-height:15.12px;color:#606266;font-weight:400;">详情</div><div class="a" style="left:1182.2px;top:694px;width:61.4px;height:26px;background:#fff;border:1px solid #dcdfe6;border-radius:2.7px"></div><svg class="a" style="left:1196px;top:701px;" width="10" height="11" viewBox="0 0 10 11"><path d="M1.2 9 L1.8 6.2 L7 1 L8.8 2.8 L3.6 8 Z" fill="none" stroke="#606266" stroke-width="0.9"/><path d="M3.5 10.3 H9.5" stroke="#606266" stroke-width="0.9"/></svg><div class="t" style="left:1206.5px;top:699.24px;font-size:10.8px;line-height:15.12px;color:#606266;font-weight:400;">编辑</div><div class="a" style="left:1248px;top:694px;width:62.8px;height:26px;background:#ff4949;border:1px solid #ff4949;border-radius:2.7px"></div><svg class="a" style="left:1262.5px;top:701px;" width="10" height="11" viewBox="0 0 10 11"><path d="M0.5 2.2 H9.5 M3.3 2 V0.6 H6.7 V2 M1.7 2.5 V10.3 H8.3 V2.5 M4 4.3 V8.6 M6 4.3 V8.6" fill="none" stroke="#fff" stroke-width="1"/></svg><div class="t" style="left:1273px;top:699.24px;font-size:10.8px;line-height:15.12px;color:#fff;font-weight:400;">删除</div><div class="a" style="left:217px;top:773px;width:1107px;height:1px;background:#dfe6ec"></div><div class="t" style="left:226px;top:742.18px;font-size:12.6px;line-height:17.64px;color:#606266;font-weight:400;">B004</div><div class="t" style="left:334.4px;top:742.18px;font-size:12.6px;line-height:17.64px;color:#606266;font-weight:400;">D栋商业中心</div><div class="t" style="left:532px;top:742.18px;font-size:12.6px;line-height:17.64px;color:#606266;font-weight:400;">科技园区南区D栋</div><div class="t" style="left:667px;top:742.18px;font-size:12.6px;line-height:17.64px;color:#606266;font-weight:400;">2021</div><div class="t" style="left:757px;top:742.18px;font-size:12.6px;line-height:17.64px;color:#606266;font-weight:400;">28</div><div class="t" style="left:847px;top:742.18px;font-size:12.6px;line-height:17.64px;color:#606266;font-weight:400;">6000</div><div class="a" style="left:442.3px;top:740px;width:37.5px;height:22px;background:#ffeded;border:1px solid #ffdbdb;border-radius:3.6px"></div><div class="t" style="left:449.6px;top:743.34px;font-size:10.8px;line-height:15.12px;color:#ff4949;font-weight:400;">商业</div><div class="a" style="left:955.2px;top:740px;width:48.6px;height:22px;background:#ffeded;border:1px solid #ffdbdb;border-radius:3.6px"></div><div class="t" style="left:962.5px;top:743.34px;font-size:10.8px;line-height:15.12px;color:#ff4949;font-weight:400;">装修中</div><div class="a" style="left:1045.1px;top:739px;width:64.6px;height:25px;background:#13ce66;border:1px solid #13ce66;border-radius:2.7px"></div><svg class="a" style="left:1060.5px;top:747.4px;" width="10" height="7" viewBox="0 0 10 7"><path d="M0.6 3.4 L3.6 6.2 L9.4 0.6" fill="none" stroke="#fff" stroke-width="1.2"/></svg><div class="t" style="left:1073.6px;top:744.24px;font-size:10.8px;line-height:15.12px;color:#fff;font-weight:400;">选择</div><div class="a" style="left:1115.2px;top:739px;width:61.5px;height:25px;background:#fff;border:1px solid #dcdfe6;border-radius:2.7px"></div><svg class="a" style="left:1129px;top:747.5px;" width="11" height="8" viewBox="0 0 11 8"><ellipse cx="5.5" cy="4" rx="4.9" ry="3.3" fill="none" stroke="#606266" stroke-width="0.9"/><circle cx="5.5" cy="4" r="1.7" fill="none" stroke="#606266" stroke-width="0.9"/></svg><div class="t" style="left:1140.5px;top:744.24px;font-size:10.8px;line-height:15.12px;color:#606266;font-weight:400;">详情</div><div class="a" style="left:1182.2px;top:739px;width:61.4px;height:25px;background:#fff;border:1px solid #dcdfe6;border-radius:2.7px"></div><svg class="a" style="left:1196px;top:746px;" width="10" height="11" viewBox="0 0 10 11"><path d="M1.2 9 L1.8 6.2 L7 1 L8.8 2.8 L3.6 8 Z" fill="none" stroke="#606266" stroke-width="0.9"/><path d="M3.5 10.3 H9.5" stroke="#606266" stroke-width="0.9"/></svg><div class="t" style="left:1206.5px;top:744.24px;font-size:10.8px;line-height:15.12px;color:#606266;font-weight:400;">编辑</div><div class="a" style="left:1248px;top:739px;width:62.8px;height:25px;background:#ff4949;border:1px solid #ff4949;border-radius:2.7px"></div><svg class="a" style="left:1262.5px;top:746px;" width="10" height="11" viewBox="0 0 10 11"><path d="M0.5 2.2 H9.5 M3.3 2 V0.6 H6.7 V2 M1.7 2.5 V10.3 H8.3 V2.5 M4 4.3 V8.6 M6 4.3 V8.6" fill="none" stroke="#fff" stroke-width="1"/></svg><div class="t" style="left:1273px;top:744.24px;font-size:10.8px;line-height:15.12px;color:#fff;font-weight:400;">删除</div><div class="a" style="left:217px;top:774px;width:1107px;height:43px;background:#fafafa"></div><div class="a" style="left:217px;top:817px;width:1107px;height:1px;background:#dfe6ec"></div><div class="t" style="left:226px;top:786.18px;font-size:12.6px;line-height:17.64px;color:#606266;font-weight:400;">B005</div><div class="t" style="left:334.4px;top:786.18px;font-size:12.6px;line-height:17.64px;color:#606266;font-weight:400;">E栋仓储中心</div><div class="t" style="left:532px;top:786.18px;font-size:12.6px;line-height:17.64px;color:#606266;font-weight:400;">科技园区西区E栋</div><div class="t" style="left:667px;top:786.18px;font-size:12.6px;line-height:17.64px;color:#606266;font-weight:400;">2017</div><div class="t" style="left:757px;top:786.18px;font-size:12.6px;line-height:17.64px;color:#606266;font-weight:400;">12</div><div class="t" style="left:847px;top:786.18px;font-size:12.6px;line-height:17.64px;color:#606266;font-weight:400;">20000</div><div class="a" style="left:442.3px;top:784px;width:37.5px;height:22px;background:#fff8e6;border:1px solid #fff1cc;border-radius:3.6px"></div><div class="t" style="left:449.6px;top:787.34px;font-size:10.8px;line-height:15.12px;color:#ffba00;font-weight:400;">生产</div><div class="a" style="left:955.2px;top:784px;width:48.6px;height:22px;background:#e7faf0;border:1px solid #d0f5e0;border-radius:3.6px"></div><div class="t" style="left:962.5px;top:787.34px;font-size:10.8px;line-height:15.12px;color:#13ce66;font-weight:400;">运营中</div><div class="a" style="left:1045.1px;top:783px;width:64.6px;height:25px;background:#13ce66;border:1px solid #13ce66;border-radius:2.7px"></div><svg class="a" style="left:1060.5px;top:791.4px;" width="10" height="7" viewBox="0 0 10 7"><path d="M0.6 3.4 L3.6 6.2 L9.4 0.6" fill="none" stroke="#fff" stroke-width="1.2"/></svg><div class="t" style="left:1073.6px;top:788.24px;font-size:10.8px;line-height:15.12px;color:#fff;font-weight:400;">选择</div><div class="a" style="left:1115.2px;top:783px;width:61.5px;height:25px;background:#fff;border:1px solid #dcdfe6;border-radius:2.7px"></div><svg class="a" style="left:1129px;top:791.5px;" width="11" height="8" viewBox="0 0 11 8"><ellipse cx="5.5" cy="4" rx="4.9" ry="3.3" fill="none" stroke="#606266" stroke-width="0.9"/><circle cx="5.5" cy="4" r="1.7" fill="none" stroke="#606266" stroke-width="0.9"/></svg><div class="t" style="left:1140.5px;top:788.24px;font-size:10.8px;line-height:15.12px;color:#606266;font-weight:400;">详情</div><div class="a" style="left:1182.2px;top:783px;width:61.4px;height:25px;background:#fff;border:1px solid #dcdfe6;border-radius:2.7px"></div><svg class="a" style="left:1196px;top:790px;" width="10" height="11" viewBox="0 0 10 11"><path d="M1.2 9 L1.8 6.2 L7 1 L8.8 2.8 L3.6 8 Z" fill="none" stroke="#606266" stroke-width="0.9"/><path d="M3.5 10.3 H9.5" stroke="#606266" stroke-width="0.9"/></svg><div class="t" style="left:1206.5px;top:788.24px;font-size:10.8px;line-height:15.12px;color:#606266;font-weight:400;">编辑</div><div class="a" style="left:1248px;top:783px;width:62.8px;height:25px;background:#ff4949;border:1px solid #ff4949;border-radius:2.7px"></div><svg class="a" style="left:1262.5px;top:790px;" width="10" height="11" viewBox="0 0 10 11"><path d="M0.5 2.2 H9.5 M3.3 2 V0.6 H6.7 V2 M1.7 2.5 V10.3 H8.3 V2.5 M4 4.3 V8.6 M6 4.3 V8.6" fill="none" stroke="#fff" stroke-width="1"/></svg><div class="t" style="left:1273px;top:788.24px;font-size:10.8px;line-height:15.12px;color:#fff;font-weight:400;">删除</div><div class="t" style="left:221.3px;top:843.31px;font-size:11.7px;line-height:16.38px;color:#606266;font-weight:400;">共 10 条</div><div class="a" style="left:278.3px;top:838px;width:89.3px;height:25px;background:#fff;border:1px solid #dcdfe6;border-radius:2.7px"></div><div class="t" style="left:296.5px;top:843.31px;font-size:11.7px;line-height:16.38px;color:#606266;font-weight:400;">10条/页</div><svg class="a" style="left:352.5px;top:848.8px;" width="8" height="5" viewBox="0 0 8 5"><path d="M0.5 0.5 L4 4 L7.5 0.5" fill="none" stroke="#c0c4cc" stroke-width="1"/></svg><svg class="a" style="left:391.5px;top:845px;" width="6" height="10" viewBox="0 0 6 10"><path d="M5 0.5 L0.8 5 L5 9.5" fill="none" stroke="#c0c4cc" stroke-width="1.1"/></svg><div class="t" style="left:426.2px;top:843.31px;font-size:11.7px;line-height:16.38px;color:#1890ff;font-weight:700;">1</div><svg class="a" style="left:460.8px;top:845px;" width="6" height="10" viewBox="0 0 6 10"><path d="M1 0.5 L5.2 5 L1 9.5" fill="none" stroke="#c0c4cc" stroke-width="1.1"/></svg><div class="t" style="left:498.9px;top:843.31px;font-size:11.7px;line-height:16.38px;color:#606266;font-weight:400;">前往</div><div class="a" style="left:526.4px;top:839px;width:40.2px;height:25px;background:#fff;border:1px solid #dcdfe6;border-radius:2.7px"></div><div class="t" style="left:543px;top:843.31px;font-size:11.7px;line-height:16.38px;color:#606266;font-weight:400;">1</div><div class="t" style="left:570.6px;top:843.31px;font-size:11.7px;line-height:16.38px;color:#606266;font-weight:400;">页</div><div class="a" style="left:1680px;top:87px;width:260px;height:923px;background:#fff;box-shadow:0 0 13.5px 0 rgba(0,0,0,.05)"></div><div class="a" style="left:0px;top:87px;width:180px;height:923px;background:#304156;box-shadow:2px 0 6px rgba(0,21,41,.35);clip-path:inset(0 -12px 0 0)"></div><div class="a" style="left:0px;top:383.6px;width:180px;height:180px;background:#1f2d3d"></div><svg class="a" style="left:20px;top:94.5px;" width="29" height="29" viewBox="0 0 29 29"><path d="M9.3 1.7 A13.3 13.3 0 0 0 12.6 27.6" fill="none" stroke="#1aa0ee" stroke-width="1.7"/><path d="M19.7 1.7 A13.3 13.3 0 0 1 16.4 27.6" fill="none" stroke="#1aa0ee" stroke-width="1.7"/><circle cx="14.5" cy="13.6" r="9.8" fill="#1468c0"/><path d="M10.2 23 V17 M14.5 25.5 V12.5 M18.6 22 V17" stroke="#35a8f2" stroke-width="1.2"/><circle cx="10.2" cy="16" r="1.6" fill="#35a8f2"/><circle cx="14.5" cy="12" r="1.6" fill="#35a8f2"/><circle cx="18.6" cy="16" r="1.6" fill="#35a8f2"/></svg><div class="t" style="left:59.5px;top:100.38px;font-size:12.6px;line-height:17.64px;color:#fff;font-weight:700;letter-spacing:-0.45px">园区招商管理系统</div><div class="t" style="left:44.8px;top:149.38px;font-size:12.6px;line-height:17.64px;color:#bfcbd9;font-weight:400;">系统首页</div><div class="t" style="left:44.8px;top:199.78px;font-size:12.6px;line-height:17.64px;color:#bfcbd9;font-weight:400;">招商工作台</div><svg class="a" style="left:152.8px;top:203.79999999999998px;" width="8.4" height="4.6" viewBox="0 0 8.4 4.6"><path d="M0.3 0.3 L4.2 4.1 L8.1 0.3" fill="none" stroke="#aeb8c4" stroke-width="1"/></svg><div class="t" style="left:44.8px;top:250.18px;font-size:12.6px;line-height:17.64px;color:#bfcbd9;font-weight:400;">运营管理</div><svg class="a" style="left:152.8px;top:254.2px;" width="8.4" height="4.6" viewBox="0 0 8.4 4.6"><path d="M0.3 0.3 L4.2 4.1 L8.1 0.3" fill="none" stroke="#aeb8c4" stroke-width="1"/></svg><div class="t" style="left:44.8px;top:300.58px;font-size:12.6px;line-height:17.64px;color:#bfcbd9;font-weight:400;">企业服务</div><svg class="a" style="left:152.8px;top:304.59999999999997px;" width="8.4" height="4.6" viewBox="0 0 8.4 4.6"><path d="M0.3 0.3 L4.2 4.1 L8.1 0.3" fill="none" stroke="#aeb8c4" stroke-width="1"/></svg><div class="t" style="left:44.8px;top:350.98px;font-size:12.6px;line-height:17.64px;color:#f4f4f5;font-weight:400;">空间资源</div><svg class="a" style="left:152.8px;top:355.40000000000003px;" width="8.4" height="4.6" viewBox="0 0 8.4 4.6"><path d="M0.3 4.3 L4.2 0.5 L8.1 4.3" fill="none" stroke="#aeb8c4" stroke-width="1"/></svg><div class="t" style="left:62.8px;top:397.48px;font-size:12.6px;line-height:17.64px;color:#409eff;font-weight:400;">楼栋楼层</div><div class="t" style="left:62.8px;top:442.48px;font-size:12.6px;line-height:17.64px;color:#bfcbd9;font-weight:400;">招商空间</div><div class="t" style="left:62.8px;top:487.48px;font-size:12.6px;line-height:17.64px;color:#bfcbd9;font-weight:400;">资产台账</div><div class="t" style="left:62.8px;top:532.48px;font-size:12.6px;line-height:17.64px;color:#bfcbd9;font-weight:400;">租赁状态</div><div class="t" style="left:44.8px;top:581.38px;font-size:12.6px;line-height:17.64px;color:#bfcbd9;font-weight:400;">数据决策</div><svg class="a" style="left:152.8px;top:585.4000000000001px;" width="8.4" height="4.6" viewBox="0 0 8.4 4.6"><path d="M0.3 0.3 L4.2 4.1 L8.1 0.3" fill="none" stroke="#aeb8c4" stroke-width="1"/></svg><div class="t" style="left:44.8px;top:631.78px;font-size:12.6px;line-height:17.64px;color:#bfcbd9;font-weight:400;">前台门户</div><svg class="a" style="left:152.8px;top:635.8000000000001px;" width="8.4" height="4.6" viewBox="0 0 8.4 4.6"><path d="M0.3 0.3 L4.2 4.1 L8.1 0.3" fill="none" stroke="#aeb8c4" stroke-width="1"/></svg><div class="t" style="left:44.8px;top:682.18px;font-size:12.6px;line-height:17.64px;color:#bfcbd9;font-weight:400;">系统管理</div><svg class="a" style="left:152.8px;top:686.2px;" width="8.4" height="4.6" viewBox="0 0 8.4 4.6"><path d="M0.3 0.3 L4.2 4.1 L8.1 0.3" fill="none" stroke="#aeb8c4" stroke-width="1"/></svg><div class="t" style="left:44.8px;top:732.58px;font-size:12.6px;line-height:17.64px;color:#bfcbd9;font-weight:400;">智脑科技</div><svg class="a" style="left:18px;top:151px;" width="12" height="10.5" viewBox="0 0 12 10.5"><path d="M0.4 10.5 Q0 9 0 6 A6 6 0 0 1 12 6 Q12 9 11.6 10.5 Z" fill="#bfcbd9"/><g fill="#304156"><circle cx="6" cy="2.2" r="0.75"/><circle cx="2.9" cy="3.6" r="0.75"/><circle cx="9.2" cy="3.6" r="0.75"/><circle cx="1.7" cy="6.6" r="0.75"/><circle cx="10.4" cy="6.6" r="0.75"/><circle cx="6" cy="8.7" r="1.3"/><path d="M5.4 8.4 L7.7 4 L6.7 8.9 Z"/></g></svg><svg class="a" style="left:18px;top:201px;" width="13" height="12.5" viewBox="0 0 13 12.5"><path d="M0 6.6 L12.6 0 L9.6 10.8 L6.2 8.9 L11.2 2 L4.8 8.2 Z" fill="#bfcbd9"/><path d="M4.6 8.6 L6 9.6 L4.8 12 Z" fill="#bfcbd9"/></svg><svg class="a" style="left:19px;top:252px;" width="10" height="10" viewBox="0 0 10 10"><rect x="0.5" y="0.5" width="9" height="9" fill="#bfcbd9"/><g fill="none" stroke="#304156" stroke-width="0.8"><path d="M2 2 H8.5"/><path d="M1.5 5.5 L3.3 5 L4.7 3.2 L6.3 6.2 L7.3 5 L8.5 5"/><path d="M2 8.2 H8.5"/></g></svg><svg class="a" style="left:18px;top:301px;" width="12.5" height="12" viewBox="0 0 12.5 12"><g fill="#bfcbd9"><circle cx="4.6" cy="3.2" r="3.1"/><path d="M0 12 Q0 6.8 4.6 6.8 Q9.2 6.8 9.2 12 Z"/><path d="M8.4 0.9 A2.8 2.8 0 0 1 8.4 6.2 Z"/><path d="M9.3 7.5 Q12.4 8.4 12.4 12 H10.1 Q10.1 9.3 9.3 7.5 Z"/></g></svg><svg class="a" style="left:18.5px;top:352px;" width="12" height="12" viewBox="0 0 12 12"><g fill="none" stroke="#f4f4f5" stroke-width="1"><path d="M2.2 2.8 V0.6 H11 V11.4 H2.2 V9"/><circle cx="6.8" cy="6.2" r="2.6"/></g><g fill="#f4f4f5"><circle cx="7" cy="6.2" r="0.8"/><rect x="0" y="3.8" width="2" height="0.9"/><rect x="0" y="5.8" width="2" height="0.9"/><rect x="0" y="7.8" width="2" height="0.9"/></g></svg><svg class="a" style="left:36px;top:399px;" width="13" height="12" viewBox="0 0 13 12"><g fill="#409eff"><rect x="0" y="0.6" width="2.8" height="2.9"/><rect x="4.3" y="0.6" width="8.4" height="2.9"/><rect x="6.5" y="5.1" width="6.2" height="2.9"/><rect x="6.5" y="9.4" width="6.2" height="2.6"/><rect x="1" y="3" width="1" height="8"/><rect x="1" y="6" width="3.8" height="0.9"/><rect x="1" y="10.3" width="3.8" height="1.3"/></g></svg><svg class="a" style="left:36px;top:444px;" width="12" height="12" viewBox="0 0 12 12"><g fill="none" stroke="#bfcbd9" stroke-width="1.1"><rect x="0.6" y="0.6" width="10.8" height="7.6" rx="0.6"/><path d="M6 8.2 V11 M3 11.2 H9"/><path d="M3.6 5.2 L5 6.1 L7 6 L7.6 3.5"/></g></svg><svg class="a" style="left:36px;top:490px;" width="12" height="10" viewBox="0 0 12 10"><g fill="none" stroke="#bfcbd9" stroke-width="1.1"><path d="M0.6 5 Q3 1 6 1 Q9 1 11.4 5 Q9 9 6 9 Q3 9 0.6 5 Z"/><circle cx="6" cy="5" r="1.8"/></g></svg><div class="t" style="left:36.8px;top:534.5px;font-size:8.2px;line-height:9px;font-weight:700;color:#bfcbd9;letter-spacing:-0.6px">123</div><div class="a" style="left:38.5px;top:544.8px;width:7.8px;height:1px;background:#bfcbd9"></div><svg class="a" style="left:18px;top:582.5px;" width="12.5" height="12" viewBox="0 0 12.5 12"><g fill="#bfcbd9"><path d="M6.25 0.5 L12.3 3.4 L6.25 6.3 L0.2 3.4 Z"/><path d="M0.2 5.2 L6.25 8.1 L12.3 5.2 V6.3 L6.25 9.2 L0.2 6.3 Z"/><path d="M0.2 7.9 L6.25 10.8 L12.3 7.9 V9 L6.25 11.9 L0.2 9 Z"/></g><g fill="#304156"><ellipse cx="3.8" cy="3.4" rx="1" ry="0.5"/><ellipse cx="8.7" cy="3.4" rx="1" ry="0.5"/><circle cx="6.25" cy="2.2" r="0.5"/><circle cx="6.25" cy="4.4" r="0.6"/></g></svg><svg class="a" style="left:18px;top:632.5px;" width="12" height="12" viewBox="0 0 12 12"><g fill="none" stroke="#bfcbd9" stroke-width="1.1"><rect x="0.6" y="0.6" width="10.8" height="8.4"/><path d="M5.6 9 V11.2 M2.4 11.4 H8.4"/><path d="M2 6.6 L3.3 3.4 L5.3 7 L8.7 2.4"/></g></svg><svg class="a" style="left:18px;top:683px;" width="12" height="12" viewBox="0 0 12 12"><path fill="#bfcbd9" fill-rule="evenodd" d="M4 0.2 L8 0.2 L9 1.8 L11 2 L12 6 L11 10 L9 10.2 L8 11.8 L4 11.8 L3 10.2 L1 10 L0 6 L1 2 L3 1.8 Z M6 3.8 A2.2 2.2 0 1 0 6.01 3.8 Z"/></svg><svg class="a" style="left:18px;top:733.5px;" width="13" height="12.5" viewBox="0 0 13 12.5"><path d="M0 6.6 L12.6 0 L9.6 10.8 L6.2 8.9 L11.2 2 L4.8 8.2 Z" fill="#bfcbd9"/><path d="M4.6 8.6 L6 9.6 L4.8 12 Z" fill="#bfcbd9"/></svg>
</body>
</html>
